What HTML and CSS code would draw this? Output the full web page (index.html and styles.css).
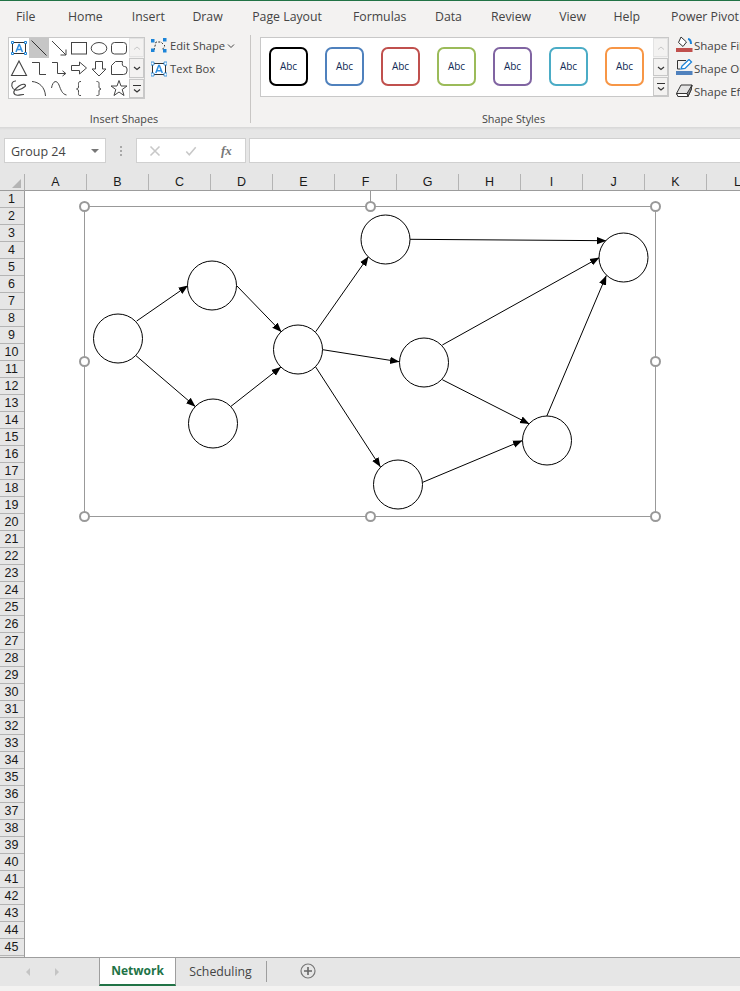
FILE: index.html
```html
<!DOCTYPE html>
<html lang="en">
<head>
<meta charset="utf-8">
<title>Network - Excel</title>
<link rel="stylesheet" href="styles.css">
</head>
<body>
<div class="app">
  <header class="ribbon">
    <nav class="tabs">
      <span class="tab t-file">File</span><span class="tab t-home">Home</span><span class="tab t-insert">Insert</span><span class="tab t-draw">Draw</span><span class="tab t-page">Page Layout</span><span class="tab t-form">Formulas</span><span class="tab t-data">Data</span><span class="tab t-rev">Review</span><span class="tab t-view">View</span><span class="tab t-help">Help</span><span class="tab t-pp">Power Pivot</span>
    </nav>
    <div class="ribbon-body">
      <section class="group group-shapes">
        <div class="group-main">
          <div class="gallery shapes-gallery">
            <div class="shape-grid">
              <div class="cell"><svg viewBox="0 0 20 20"><rect x="3.5" y="4.5" width="13" height="11" fill="none" stroke="#333"/><path d="M7 14 10 6.500h.4L13.400 14M8 11.500h4.400" fill="none" stroke="#2e8ee0" stroke-width="1.500"/><path d="M2.500 3.500h2v2h-2zM15.500 3.500h2v2h-2zM2.500 14.500h2v2h-2zM15.500 14.500h2v2h-2z" fill="#fff" stroke="#1c84d8"/></svg></div>
              <div class="cell cell-on"><svg viewBox="0 0 20 20"><path d="M2.500 2.500 17.500 17.500" stroke="#333" fill="none"/></svg></div>
              <div class="cell"><svg viewBox="0 0 20 20"><path d="M3 3 17 17M11.500 17H17V11.500" stroke="#444" fill="none"/></svg></div>
              <div class="cell"><svg viewBox="0 0 20 20"><rect x="2.500" y="4.500" width="15" height="11.500" fill="#fff" stroke="#444"/></svg></div>
              <div class="cell"><svg viewBox="0 0 20 20"><ellipse cx="10" cy="10.300" rx="7.800" ry="5.800" fill="#fff" stroke="#444"/></svg></div>
              <div class="cell"><svg viewBox="0 0 20 20"><rect x="2.500" y="4.500" width="15" height="11.500" rx="3" fill="#fff" stroke="#444"/></svg></div>
              <div class="cell"><svg viewBox="0 0 20 20"><path d="M10 3 17.500 17.500H2.500Z" fill="#fff" stroke="#444" stroke-width="1.100"/></svg></div>
              <div class="cell"><svg viewBox="0 0 20 20"><path d="M3 4.500H10.500V16.500H17" fill="none" stroke="#444"/></svg></div>
              <div class="cell"><svg viewBox="0 0 20 20"><path d="M3 4.500H8.500V15.500H16.500M13.500 12.800 16.800 15.500 13.500 18" fill="none" stroke="#444"/></svg></div>
              <div class="cell"><svg viewBox="0 0 20 20"><path d="M2.500 7.500H10.500V4L17.500 10 10.500 16V12.500H2.500Z" fill="#fff" stroke="#444"/></svg></div>
              <div class="cell"><svg viewBox="0 0 20 20"><path d="M6.500 3.500H13.500V11H17L10 18 3 11H6.500Z" fill="#fff" stroke="#444"/></svg></div>
              <div class="cell"><svg viewBox="0 0 20 20"><path d="M6.500 3.500H13.500Q12.500 8.500 15.500 8.500 18 8.500 18 11V13Q18 16.500 14.500 16.500H2.500V7.500Z" fill="#fff" stroke="#444"/></svg></div>
              <div class="cell"><svg viewBox="0 0 20 20"><path d="M7 3C3 2.500 1.500 7 4 10.500 7 14 13 11 16 8.500 18 6.500 14 5 10 8 6 11 3 14 6 16.500 9 18.500 12 16 15 16.500" fill="none" stroke="#444" stroke-width="1.100"/></svg></div>
              <div class="cell"><svg viewBox="0 0 20 20"><path d="M3 3.500C10 4 16 9 16.500 18" fill="none" stroke="#444"/></svg></div>
              <div class="cell"><svg viewBox="0 0 20 20"><path d="M2.500 10C4 2 8 2 10 7 12 12 13 16 17.500 17" fill="none" stroke="#444"/></svg></div>
              <div class="cell"><svg viewBox="0 0 20 20"><path d="M12 3.500C9 3.500 9.500 5 9.500 7.500S9.500 10.500 7.500 11C9.500 11.500 9.500 12 9.500 14.500S9 17.500 12 17.500" fill="none" stroke="#444"/></svg></div>
              <div class="cell"><svg viewBox="0 0 20 20"><path d="M7.500 3.500C10.500 3.500 10 5 10 7.500S10 10.500 12 11C10 11.500 10 12 10 14.500S10.500 17.500 7.500 17.500" fill="none" stroke="#444"/></svg></div>
              <div class="cell"><svg viewBox="0 0 20 20"><path d="M10 2.500 12 8H18L13.200 11.500 15 17.500 10 14 5 17.500 6.800 11.500 2 8H8Z" fill="#fff" stroke="#444"/></svg></div>
            </div>
            <div class="scroller">
              <div class="scroll-btn off"><svg viewBox="0 0 14 18"><path d="M4 10.500 7 8l3 2.500" fill="none" stroke="#c8c8c8"/></svg></div>
              <div class="scroll-btn"><svg viewBox="0 0 14 18"><path d="M4 8 7 10.500 10 8" fill="none" stroke="#333" stroke-width="1.200"/></svg></div>
              <div class="scroll-btn"><svg viewBox="0 0 14 18"><path d="M3 5.500H11M4 9.500 7 12 10 9.500" fill="none" stroke="#333" stroke-width="1.200"/></svg></div>
            </div>
          </div>
          <div class="commands commands-left">
            <div class="cmd"><svg class="cmd-icon" viewBox="0 0 16 16"><path d="M3 12 5 4H10L14 8 11 12" fill="none" stroke="#333" stroke-dasharray="2 1.500"/><path d="M0 1h3.500v3.500H0zM12 0h3.500v3.500H12zM0 10.500h3.500V14H0zM12 11h3.500v3.500H12z" fill="#1c84d8"/></svg><span>Edit Shape</span><svg class="chev" viewBox="0 0 8 6"><path d="M1 1.500 4 4.500 7 1.500" fill="none" stroke="#444"/></svg></div>
            <div class="cmd"><svg class="cmd-icon" viewBox="0 0 16 16"><rect x="1.500" y="2.500" width="13" height="11" fill="#fff" stroke="#333"/><path d="M4.800 12 7.700 4.500h.7L11.300 12M6 9.800h4.200" fill="none" stroke="#2e8ee0" stroke-width="1.500"/><path d="M0 1h3v3H0zM13 1h3v3h-3zM0 12h3v3H0zM13 12h3v3h-3z" fill="#fff" stroke="#1c84d8" stroke-width=".8"/></svg><span>Text Box</span></div>
          </div>
        </div>
        <div class="group-label">Insert Shapes</div>
      </section>
      <section class="group group-styles">
        <div class="group-main">
          <div class="gallery styles-gallery">
            <div class="style-row">
              <div class="style s-black">Abc</div>
              <div class="style s-blue">Abc</div>
              <div class="style s-red">Abc</div>
              <div class="style s-green">Abc</div>
              <div class="style s-purple">Abc</div>
              <div class="style s-teal">Abc</div>
              <div class="style s-orange">Abc</div>
            </div>
            <div class="scroller">
              <div class="scroll-btn off"><svg viewBox="0 0 14 18"><path d="M4 10.500 7 8l3 2.500" fill="none" stroke="#c8c8c8"/></svg></div>
              <div class="scroll-btn"><svg viewBox="0 0 14 18"><path d="M4 8 7 10.500 10 8" fill="none" stroke="#333" stroke-width="1.200"/></svg></div>
              <div class="scroll-btn"><svg viewBox="0 0 14 18"><path d="M3 5.500H11M4 9.500 7 12 10 9.500" fill="none" stroke="#333" stroke-width="1.200"/></svg></div>
            </div>
          </div>
          <div class="commands commands-right">
            <div class="cmd"><svg class="cmd-icon-l" viewBox="0 0 17 17"><path d="M5 1 10.500 6 7 10.500 2.500 6.500Z" fill="#fff" stroke="#333"/><path d="M12 3c2 .3 3 2 3 5" fill="none" stroke="#1c84d8" stroke-width="2"/><rect y="12" width="16.500" height="4" fill="#c0504d"/></svg><span>Shape Fill</span></div>
            <div class="cmd"><svg class="cmd-icon-l" viewBox="0 0 17 17"><path d="M1.500 10V1.500H10M1.500 10H4" fill="none" stroke="#333"/><path d="M5 10 6 7 13 0.500 15.500 3 9 9.500Z" fill="#fff" stroke="#1c84d8" stroke-width="1.300"/><rect y="12" width="16.500" height="4" fill="#4f81bd"/></svg><span>Shape Outline</span></div>
            <div class="cmd"><svg class="cmd-icon-l" viewBox="0 0 17 17"><path d="M5 3H16L15 8 12 14.500H2L.5 11.500Z" fill="#e4e4e4" stroke="#333"/><path d="M11 11.500 16 3 15 8 12 14.500Z" fill="#999" stroke="#333"/><path d="M.5 11.500H11L12 14.500H2Z" fill="#fff" stroke="#333"/></svg><span>Shape Effects</span></div>
          </div>
        </div>
        <div class="group-label">Shape Styles</div>
      </section>
    </div>
  </header>

  <div class="formula-bar">
    <div class="name-box"><span>Group 24</span><i class="caret"></i></div>
    <div class="dots"><i></i><i></i><i></i></div>
    <div class="fn-box">
      <svg class="fn-icon" viewBox="0 0 12 12"><path d="M1.500 1.500 10.500 10.500M10.500 1.500 1.500 10.500" stroke="#c8c8c8" stroke-width="1.600" fill="none"/></svg>
      <svg class="fn-icon" viewBox="0 0 14 12"><path d="M1.500 6.500 5 10.500 12.500 1.500" stroke="#c8c8c8" stroke-width="1.800" fill="none"/></svg>
      <span class="fx">fx</span>
    </div>
    <div class="formula-input"></div>
  </div>

  <main class="sheet">
    <div class="corner"><i></i></div>
    <div class="col-heads">
      <div class="col">A</div><div class="col">B</div><div class="col">C</div><div class="col">D</div><div class="col">E</div><div class="col">F</div><div class="col">G</div><div class="col">H</div><div class="col">I</div><div class="col">J</div><div class="col">K</div><div class="col">L</div>
    </div>
    <div class="row-heads">
      <div class="row">1</div><div class="row">2</div><div class="row">3</div><div class="row">4</div><div class="row">5</div><div class="row">6</div><div class="row">7</div><div class="row">8</div><div class="row">9</div><div class="row">10</div><div class="row">11</div><div class="row">12</div><div class="row">13</div><div class="row">14</div><div class="row">15</div><div class="row">16</div><div class="row">17</div><div class="row">18</div><div class="row">19</div><div class="row">20</div><div class="row">21</div><div class="row">22</div><div class="row">23</div><div class="row">24</div><div class="row">25</div><div class="row">26</div><div class="row">27</div><div class="row">28</div><div class="row">29</div><div class="row">30</div><div class="row">31</div><div class="row">32</div><div class="row">33</div><div class="row">34</div><div class="row">35</div><div class="row">36</div><div class="row">37</div><div class="row">38</div><div class="row">39</div><div class="row">40</div><div class="row">41</div><div class="row">42</div><div class="row">43</div><div class="row">44</div><div class="row">45</div>
    </div>
    <div class="canvas">
      <svg class="diagram" viewBox="25 191 715 765">
        <defs>
          <marker id="head" markerUnits="userSpaceOnUse" markerWidth="11" markerHeight="9" refX="9.500" refY="4.500" orient="auto">
            <path d="M0 .8 9.500 4.500 0 8.200Z" fill="#000"/>
          </marker>
        </defs>
        <g class="edges">
          <line x1="136.700" y1="321" x2="188" y2="285.500"/>
          <line x1="136" y1="355.700" x2="195.500" y2="406.700"/>
          <line x1="236.700" y1="285.700" x2="281.500" y2="332"/>
          <line x1="231" y1="406.300" x2="281" y2="367"/>
          <line x1="315.700" y1="331.700" x2="368.500" y2="256.500"/>
          <line x1="322.700" y1="349.700" x2="399.500" y2="361.800"/>
          <line x1="315.700" y1="367" x2="380.500" y2="467"/>
          <line x1="409.700" y1="239.300" x2="606.500" y2="240.700"/>
          <line x1="442.300" y1="345" x2="599.500" y2="257.500"/>
          <line x1="442.300" y1="379.700" x2="529.500" y2="424"/>
          <line x1="422.700" y1="482.300" x2="522.500" y2="440.500"/>
          <line x1="546.700" y1="416.300" x2="606.300" y2="275.500"/>
        </g>
        <g class="nodes">
          <circle cx="118" cy="338.500" r="24.500"/>
          <circle cx="212" cy="285.500" r="24.500"/>
          <circle cx="213" cy="423.500" r="24.500"/>
          <circle cx="298" cy="349.500" r="24.500"/>
          <circle cx="385.500" cy="239.500" r="24.500"/>
          <circle cx="623.500" cy="257.500" r="24.500"/>
          <circle cx="424" cy="362.500" r="24.500"/>
          <circle cx="547" cy="440.500" r="24.500"/>
          <circle cx="398" cy="484.500" r="24.500"/>
        </g>
        <path class="rot-line" d="M370.500 191V206"/>
        <rect class="sel-box" x="84.500" y="206.500" width="571" height="310"/>
        <g class="handles">
          <circle cx="84.500" cy="206.500" r="4.500"/>
          <circle cx="370.500" cy="206.500" r="4.500"/>
          <circle cx="655.500" cy="206.500" r="4.500"/>
          <circle cx="84.500" cy="361.500" r="4.500"/>
          <circle cx="655.500" cy="361.500" r="4.500"/>
          <circle cx="84.500" cy="516.500" r="4.500"/>
          <circle cx="370.500" cy="516.500" r="4.500"/>
          <circle cx="655.500" cy="516.500" r="4.500"/>
        </g>
      </svg>
    </div>
  </main>

  <footer class="sheet-tabs">
    <div class="tab-nav">
      <svg class="nav-arrow" viewBox="0 0 6 10"><path d="M5 1 1 5 5 9Z" fill="#c4c4c4"/></svg>
      <svg class="nav-arrow" viewBox="0 0 6 10"><path d="M1 1 5 5 1 9Z" fill="#c4c4c4"/></svg>
    </div>
    <div class="sheet-tab active">Network</div>
    <div class="sheet-tab">Scheduling</div>
    <i class="tab-sep"></i>
    <svg class="add-sheet" viewBox="0 0 16 16"><circle cx="8" cy="8" r="7" fill="none" stroke="#777" stroke-width="1.200"/><path d="M8 4v8M4 8h8" stroke="#666" stroke-width="1.600"/></svg>
  </footer>
  <div class="status"></div>
</div>
</body>
</html>
```
FILE: styles.css
```css
* { box-sizing: border-box; }
html, body { margin: 0; padding: 0; background: #fff; }
body { width: 740px; height: 991px; overflow: hidden; font-family: "Open Sans", "Liberation Sans", sans-serif; color: #444; }
.app { width: 740px; height: 991px; display: flex; flex-direction: column; overflow: hidden; }

/* ribbon */
.ribbon { height: 127px; flex: none; background: #f3f2f1; border-top: 1px solid #217346; overflow: hidden; }
.tabs { height: 32px; display: flex; align-items: center; white-space: nowrap; font-size: 12.300px; padding-bottom: 2px; }
.tab { flex: none; }
.t-file { margin-left: 16px; }
.t-home { margin-left: 32.500px; }
.t-insert { margin-left: 29px; }
.t-draw { margin-left: 27.500px; }
.t-page { margin-left: 29.500px; }
.t-form { margin-left: 31px; }
.t-data { margin-left: 28.500px; }
.t-rev { margin-left: 29px; }
.t-view { margin-left: 28px; }
.t-help { margin-left: 27.500px; }
.t-pp { margin-left: 31px; }

.ribbon-body { display: flex; height: 94px; }
.group { display: flex; flex-direction: column; flex: none; }
.group-main { display: flex; height: 79px; padding-top: 4px; align-items: flex-start; }
.group-label { font-size: 10.800px; text-align: center; line-height: 14px; }
.group-shapes { width: 251px; padding-left: 8px; position: relative; }
.group-shapes::after { content: ""; position: absolute; right: 0; top: 2px; bottom: 4px; width: 1px; background: #c8c6c4; }
.group-shapes .group-label { width: 232px; }
.group-styles { width: 489px; padding-left: 9px; }
.group-styles .group-label { width: 507px; }

.gallery { display: flex; background: #fff; border: 1px solid #c8c8c8; flex: none; }
.shapes-gallery { width: 137px; height: 62px; }
.shape-grid { display: grid; grid-template-columns: repeat(6, 20px); grid-auto-rows: 20px; width: 120px; }
.cell svg { display: block; width: 20px; height: 20px; }
.cell-on { background: #c6c6c6; }
.scroller { display: flex; flex-direction: column; width: 15px; flex: none; background: #f3f2f1; gap: 1px; }
.scroll-btn { flex: 1; min-height: 0; width: 15px; background: #f3f2f1; border: 1px solid #c8c8c8; margin-right: -1px; overflow: hidden; }
.scroll-btn svg { display: block; width: 14px; height: 18px; }
.scroll-btn.off { border-color: #e3e3e3; }

.commands { display: flex; flex-direction: column; font-size: 11.200px; white-space: nowrap; }
.commands-left { margin-left: 6px; gap: 6px; }
.commands-right { margin-left: 7px; gap: 6px; margin-top: -1px; font-size: 11.500px; }
.commands-right .cmd span { margin: 2px 0 0 -1px; }
.cmd { display: flex; align-items: center; height: 17px; }
.cmd-icon { width: 16px; height: 16px; margin-right: 3px; flex: none; }
.cmd-icon-l { width: 17px; height: 17px; margin-right: 2px; flex: none; }
.chev { width: 8px; height: 6px; margin-left: 2px; }

.styles-gallery { width: 409px; height: 60px; }
.style-row { width: 393px; display: flex; gap: 17px; padding: 9px 0 0 8px; }
.style { width: 39px; height: 39px; border: 2px solid; border-radius: 7px; font-size: 10px; padding-bottom: 2px; display: flex; align-items: center; justify-content: center; color: #102a55; background: #fff; flex: none; }
.s-black { border-color: #000; }
.s-blue { border-color: #4f81bd; }
.s-red { border-color: #c0504d; }
.s-green { border-color: #9bbb59; }
.s-purple { border-color: #8064a2; }
.s-teal { border-color: #4bacc6; }
.s-orange { border-color: #f79646; }

/* formula bar */
.formula-bar { height: 47px; flex: none; display: flex; align-items: flex-start; padding: 11px 0 0 4px; background: linear-gradient(#d6d6d6, #e6e6e6 3px); }
.name-box { width: 102px; height: 25px; background: #fff; border: 1px solid #d0d0d0; display: flex; align-items: center; justify-content: space-between; padding: 1px 6px 0 6px; font-size: 12.500px; flex: none; }
.caret { width: 0; height: 0; border-left: 4px solid transparent; border-right: 4px solid transparent; border-top: 4px solid #777; margin-bottom: 1px; }
.dots { width: 30px; height: 25px; display: flex; flex-direction: column; align-items: center; justify-content: center; gap: 2px; flex: none; }
.dots i { width: 2px; height: 2px; background: #a8a8a8; display: block; }
.fn-box { width: 110px; height: 25px; background: #fff; border: 1px solid #d0d0d0; display: flex; align-items: center; padding-left: 12px; flex: none; }
.fn-icon { width: 12px; height: 12px; margin-right: 24px; flex: none; }
.fx { font-family: "Liberation Serif", serif; font-style: italic; font-weight: 700; font-size: 13px; color: #777; }
.formula-input { flex: 1; height: 25px; margin-left: 3px; background: #fff; border: 1px solid #d0d0d0; border-right: 0; }

/* sheet */
.sheet { height: 783px; flex: none; display: grid; grid-template-columns: 25px 715px; grid-template-rows: 17px 766px; background: #fff; font-family: "Liberation Sans", Arial, sans-serif; font-size: 12.500px; color: #1a1a1a; }
.corner { background: #e6e6e6; border-right: 1px solid #b0b0b0; border-bottom: 1px solid #9c9c9c; position: relative; overflow: hidden; }
.corner i { position: absolute; right: 3px; bottom: 2px; width: 0; height: 0; border-left: 9px solid transparent; border-bottom: 9px solid #b4b4b4; }
.col-heads { display: flex; background: #e6e6e6; border-bottom: 1px solid #9c9c9c; overflow: hidden; }
.col { width: 62px; flex: none; text-align: center; border-right: 1px solid #b4b4b4; line-height: 16px; }
.row-heads { background: #e6e6e6; border-right: 1px solid #9c9c9c; overflow: hidden; }
.row { height: 17px; text-align: center; border-bottom: 1px solid #b4b4b4; line-height: 17px; padding-right: 1px; }
.canvas { position: relative; background: #fff; }
.diagram { position: absolute; left: 0; top: 0; width: 715px; height: 765px; overflow: visible; display: block; }
.edges line { stroke: #000; stroke-width: 1; marker-end: url(#head); }
.nodes circle { fill: #fff; stroke: #000; stroke-width: 1; }
.rot-line { stroke: #999; stroke-width: 1; fill: none; }
.sel-box { fill: none; stroke: #999; stroke-width: 1; }
.handles circle { fill: #fff; stroke: #999; stroke-width: 2; }

/* sheet tabs */
.sheet-tabs { height: 29px; flex: none; display: flex; align-items: stretch; background: #e6e6e6; border-top: 1px solid #9e9e9e; font-size: 12.300px; }
.tab-nav { width: 99px; display: flex; align-items: center; flex: none; padding-left: 25px; gap: 23px; }
.nav-arrow { width: 6px; height: 10px; flex: none; }
.sheet-tab { display: flex; align-items: center; justify-content: center; flex: none; height: 26px; }
.sheet-tab.active { width: 77px; background: #fff; color: #217346; font-weight: 700; font-size: 12px; border-left: 1px solid #9e9e9e; border-right: 1px solid #9e9e9e; border-bottom: 2px solid #217346; height: 28px; padding-bottom: 1px; }
.sheet-tab:not(.active) { width: 89px; }
.tab-sep { width: 1px; height: 21px; background: #9e9e9e; margin: 3px 0 0 1px; flex: none; }
.add-sheet { width: 16px; height: 16px; margin: 5px 0 0 33px; flex: none; }
.status { flex: 1; background: #f3f2f1; }
```
